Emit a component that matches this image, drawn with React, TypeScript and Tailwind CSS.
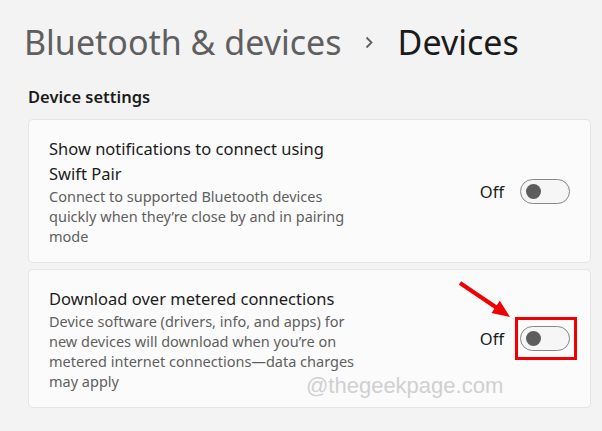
import React from "react";

const FONT = { fontFamily: '"Noto Sans", "Open Sans", sans-serif' };

function Toggle() {
  return (
    <div className="flex h-[25px] w-[50px] items-center rounded-full border-[1.25px] border-[#878787] bg-[#f6f6f6] pl-[5px]">
      <div className="h-[15px] w-[15px] rounded-full bg-[#5d5d5d]" />
    </div>
  );
}

function SettingCard({
  title,
  desc,
  children,
}: {
  title: string[];
  desc: string[];
  children?: React.ReactNode;
}) {
  return (
    <div className="flex items-center justify-between rounded-[5px] border border-[#e5e5e5] bg-[#fbfbfb] py-4 pl-5 pr-5">
      <div className="w-[320px]">
        {title.map((t) => (
          <div key={t} className="whitespace-nowrap text-[16.5px] leading-[25px] text-[#1b1b1b]">
            {t}
          </div>
        ))}
        {desc.map((d) => (
          <div key={d} className="whitespace-nowrap text-[14.5px] leading-[20px] text-[#5f5f5f]">
            {d}
          </div>
        ))}
      </div>
      <div className="flex items-center gap-4">
        <span className="text-[16.5px] leading-[25px] text-[#1b1b1b]">Off</span>
        {children}
      </div>
    </div>
  );
}

export default function App() {
  return (
    <div className="relative h-[431px] w-[602px] overflow-hidden bg-[#f3f3f3]" style={FONT}>
      <div className="flex items-center pl-[24px] pt-[18px] text-[34px] leading-[48px]">
        <span className="text-[#5f5f5f]">Bluetooth &amp; devices</span>
        <svg className="ml-[22px] mr-[24px]" width="10" height="13" viewBox="0 0 10 13">
          <path d="M2.5 1.5 L7.5 6.5 L2.5 11.5" fill="none" stroke="#5f5f5f" strokeWidth="1.8" />
        </svg>
        <span className="text-[#1b1b1b]">Devices</span>
      </div>

      <div className="pl-[28px] pr-[11px]">
        <div className="mt-[18px] text-[16.5px] font-semibold leading-[25px] text-[#1b1b1b]">
          Device settings
        </div>

        <div className="mt-[10px] flex flex-col gap-[6px]">
          <SettingCard
            title={["Show notifications to connect using", "Swift Pair"]}
            desc={[
              "Connect to supported Bluetooth devices",
              "quickly when they’re close by and in pairing",
              "mode",
            ]}
          >
            <Toggle />
          </SettingCard>

          <SettingCard
            title={["Download over metered connections"]}
            desc={[
              "Device software (drivers, info, and apps) for",
              "new devices will download when you’re on",
              "metered internet connections—data charges",
              "may apply",
            ]}
          >
            <div className="relative">
              <Toggle />
              <div className="absolute left-[-5px] top-[-9px] h-[43px] w-[62px] border-[3px] border-[#f00000]" />
            </div>
          </SettingCard>
        </div>
      </div>

      <svg className="absolute left-0 top-0" width="602" height="431" viewBox="0 0 602 431">
        <line x1="460" y1="283" x2="497" y2="308" stroke="#f00000" strokeWidth="4" />
        <polygon points="510,317 491.5,313 499.8,300.8" fill="#f00000" />
      </svg>

      <div
        className="absolute left-[306px] top-[373px] text-[22px] leading-[25px] text-[#d0d0d0]"
        style={{ fontFamily: '"Liberation Sans", Arial, sans-serif' }}
      >
        @thegeekpage.com
      </div>
    </div>
  );
}
